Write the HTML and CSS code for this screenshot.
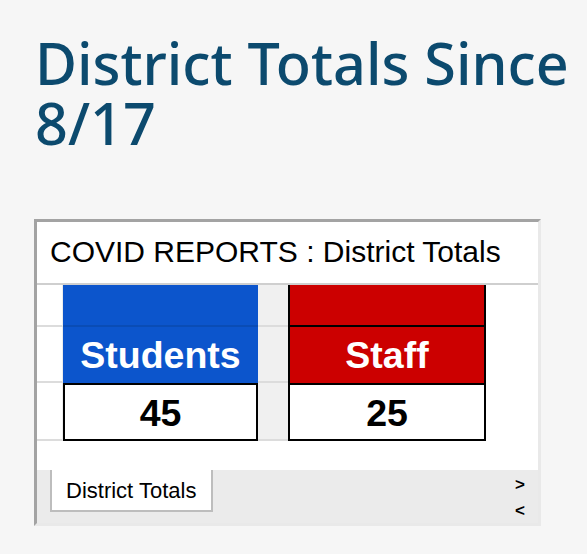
FILE: index.html
```html
<!DOCTYPE html>
<html lang="en">
<head>
    <meta charset="UTF-8">
    <meta name="viewport" content="width=device-width, initial-scale=1.0">
    <title>District Totals</title>
    <link rel="stylesheet" href="styles.css">
</head>
<body>
    <div class="container">
        <h1 class="page-title">District Totals Since 8/17</h1>

        <!-- Embedded sheet -->
        <div class="sheet-frame">
            <div class="sheet-header">COVID REPORTS : District Totals</div>

            <div class="sheet-grid">
                <!-- row 1 -->
                <div class="cell gutter"></div>
                <div class="cell students top"></div>
                <div class="cell spacer"></div>
                <div class="cell staff top"></div>
                <div class="cell blank"></div>

                <!-- row 2 -->
                <div class="cell gutter"></div>
                <div class="cell students label">Students</div>
                <div class="cell spacer"></div>
                <div class="cell staff label">Staff</div>
                <div class="cell blank"></div>

                <!-- row 3 -->
                <div class="cell gutter"></div>
                <div class="cell value">45</div>
                <div class="cell spacer"></div>
                <div class="cell value">25</div>
                <div class="cell blank"></div>

                <!-- row 4 -->
                <div class="cell gutter last"></div>
                <div class="cell empty"></div>
                <div class="cell empty"></div>
                <div class="cell empty"></div>
                <div class="cell blank"></div>
            </div>

            <div class="sheet-tabs">
                <div class="tab active">District Totals</div>
                <div class="tab-arrows">
                    <span>&gt;</span>
                    <span>&lt;</span>
                </div>
            </div>
        </div>
    </div>
</body>
</html>
```

FILE: styles.css
```css
:root {
    --title-color: #0c4a6e;
    --page-bg: #f6f6f6;
    --students-color: #0c55cc;
    --staff-color: #cc0000;
    --grid-line: #dcdcdc;
    --spacer-bg: #f0f0f0;
    --tab-bar-bg: #ebebeb;
}

* {
    margin: 0;
    padding: 0;
    box-sizing: border-box;
}

body {
    background-color: var(--page-bg);
    font-family: "Liberation Sans", Arial, sans-serif;
    color: #000;
}

.container {
    padding: 33px 0 0 34px;
}

.page-title {
    font-family: "Noto Sans", sans-serif;
    font-weight: 500;
    font-size: 57.5px;
    line-height: 60px;
    color: var(--title-color);
    padding-left: 1px;
    margin-bottom: 66px;
}

/* Embedded sheet frame */
.sheet-frame {
    width: 507px;
    border-style: solid;
    border-width: 3px;
    border-color: #a3a3a3 #e9e9e9 #e9e9e9 #a3a3a3;
    background-color: #fff;
}

.sheet-header {
    height: 63px;
    padding: 12px 0 0 13px;
    font-size: 30px;
    line-height: 36px;
    border-bottom: 2px solid #cfcfcf;
}

.sheet-grid {
    display: grid;
    grid-template-columns: 26px 195px 30px 198px 1fr;
    grid-template-rows: 42px 56px 58px 29px;
}

.cell {
    display: flex;
    align-items: center;
    justify-content: center;
    font-weight: bold;
    font-size: 37.5px;
}

.gutter {
    border-bottom: 2px solid var(--grid-line);
    border-right: 1px solid #ececec;
}

.gutter.last {
    border: none;
}

.spacer {
    background-color: var(--spacer-bg);
    border-bottom: 2px solid var(--grid-line);
}

.students {
    background-color: var(--students-color);
    color: #fff;
}

.students.top {
    border-bottom: 2px solid #0a4cb5;
}

.staff {
    background-color: var(--staff-color);
    color: #fff;
    border-left: 2px solid #000;
    border-right: 2px solid #000;
}

.staff.top {
    border-bottom: 2px solid #000;
}

.value {
    background-color: #fff;
    border: 2px solid #000;
    padding-top: 2px;
}

/* Sheet tabs */
.sheet-tabs {
    height: 53px;
    background-color: var(--tab-bar-bg);
    display: flex;
    justify-content: space-between;
    padding-left: 13px;
}

.tab {
    width: 163px;
    height: 42px;
    background-color: #fff;
    border: 2px solid #bdbdbd;
    border-top: none;
    font-size: 22px;
    line-height: 42px;
    padding-left: 14px;
}

.tab-arrows {
    display: flex;
    flex-direction: column;
    align-items: center;
    padding: 2px 13px 0 0;
    font-weight: bold;
    font-size: 17px;
    line-height: 26px;
}
```
